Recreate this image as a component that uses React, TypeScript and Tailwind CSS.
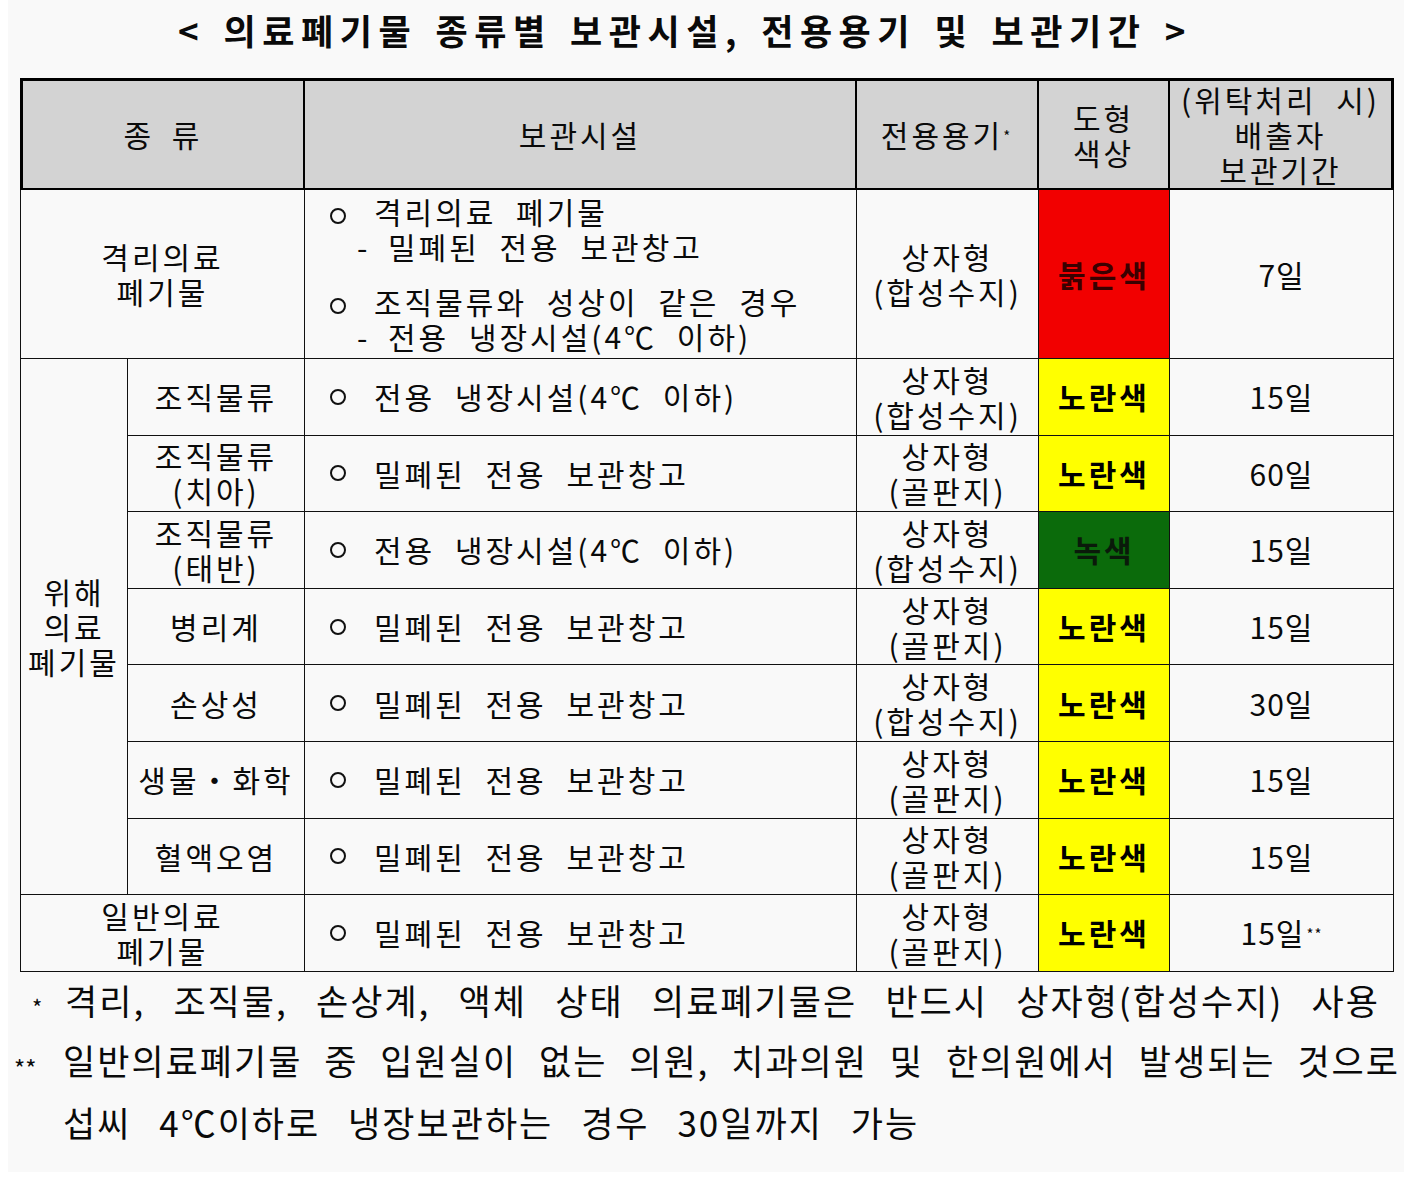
import React from "react";

const cellBase = "border-r border-b border-[#111] flex items-center justify-center text-center";
const head = "bg-[#d3d3d3] border-r-2 border-b-2 border-t-[3px] border-black flex flex-col items-center justify-center text-center";

function Circle() {
  return (
    <span className="inline-block w-[44px] align-middle">
      <span className="block w-[16px] h-[16px] rounded-full border-[2.5px] border-[#111]" />
    </span>
  );
}

function Facility({ text }: { text: string }) {
  return (
    <div className={`${cellBase} justify-start pl-[25px] whitespace-nowrap`}>
      <Circle />
      <span>{text}</span>
    </div>
  );
}

function Container({ kind }: { kind: string }) {
  return (
    <div className={`${cellBase} flex-col leading-[35px]`}>
      <span>상자형</span>
      <span>({kind})</span>
    </div>
  );
}

function Color({ c }: { c: "y" | "g" | "r" }) {
  if (c === "r")
    return <div className={`${cellBase} bg-[#f20000] font-bold text-[#3a0000]`}>붉은색</div>;
  if (c === "g")
    return <div className={`${cellBase} bg-[#0b6b0b] font-bold text-[#0a1a0a]`}>녹색</div>;
  return <div className={`${cellBase} bg-[#ffff00] font-bold text-black`}>노란색</div>;
}

function Days({ d, star }: { d: string; star?: boolean }) {
  return (
    <div className={`${cellBase} tracking-[1px]`}>
      <span>
        {d}
        {star && <sup className="text-[15px] ml-[2px] relative top-[-5px]">**</sup>}
      </span>
    </div>
  );
}

type Row = { name: React.ReactNode; fac: string; kind: string; color: "y" | "g" | "r"; days: string };

const rows: Row[] = [
  { name: "조직물류", fac: "전용 냉장시설(4℃ 이하)", kind: "합성수지", color: "y", days: "15일" },
  { name: <>조직물류<br />(치아)</>, fac: "밀폐된 전용 보관창고", kind: "골판지", color: "y", days: "60일" },
  { name: <>조직물류<br />(태반)</>, fac: "전용 냉장시설(4℃ 이하)", kind: "합성수지", color: "g", days: "15일" },
  { name: "병리계", fac: "밀폐된 전용 보관창고", kind: "골판지", color: "y", days: "15일" },
  { name: "손상성", fac: "밀폐된 전용 보관창고", kind: "합성수지", color: "y", days: "30일" },
  { name: "생물・화학", fac: "밀폐된 전용 보관창고", kind: "골판지", color: "y", days: "15일" },
  { name: "혈액오염", fac: "밀폐된 전용 보관창고", kind: "골판지", color: "y", days: "15일" },
];

export default function App() {
  return (
    <div className="w-[1412px] h-[1183px] bg-white font-['Noto_Sans_CJK_KR','Noto_Sans',sans-serif] text-[#0a0a0a]">
      <div className="mx-[8px] h-[1172px] bg-[#f9f9f9] pt-[10px]">
        <h1 className="pl-[170px] text-[35px] leading-[40px] font-bold tracking-[6.5px] [word-spacing:4px] whitespace-nowrap">
          &lt; 의료폐기물 종류별 보관시설, 전용용기 및 보관기간 &gt;
        </h1>

        <div className="ml-[12px] mt-[28px] grid w-[1374px] grid-cols-[108px_177px_552px_182px_131px_224px] grid-rows-[112px_169px_repeat(8,76.6px)] text-[30px] leading-[35px] tracking-[3px] [word-spacing:10px]">
          {/* header */}
          <div className={`${head} col-span-2 border-l-[3px] [word-spacing:8px]`}>종 류</div>
          <div className={head}>보관시설</div>
          <div className={head}>
            <span>
              전용용기<sup className="text-[15px] relative top-[-5px]">*</sup>
            </span>
          </div>
          <div className={head}>
            <span>도형</span>
            <span>색상</span>
          </div>
          <div className={`${head} border-r-[3px]`}>
            <span className="[word-spacing:10px] whitespace-nowrap">(위탁처리 시)</span>
            <span>배출자</span>
            <span>보관기간</span>
          </div>

          {/* 격리 */}
          <div className={`${cellBase} col-span-2 border-l flex-col`}>
            <span>격리의료</span>
            <span>폐기물</span>
          </div>
          <div className={`${cellBase} flex-col items-start justify-center pl-[25px] text-left whitespace-nowrap`}>
            <div>
              <Circle />
              <span>격리의료 폐기물</span>
            </div>
            <div className="pl-[27px]">
              <span className="inline-block w-[31px]">-</span>
              <span>밀폐된 전용 보관창고</span>
            </div>
            <div className="mt-[20px]">
              <Circle />
              <span>조직물류와 성상이 같은 경우</span>
            </div>
            <div className="pl-[27px]">
              <span className="inline-block w-[31px]">-</span>
              <span>전용 냉장시설(4℃ 이하)</span>
            </div>
          </div>
          <Container kind="합성수지" />
          <Color c="r" />
          <Days d="7일" />

          {/* 위해 */}
          {rows.map((r, i) => (
            <React.Fragment key={i}>
              {i === 0 && (
                <div className={`${cellBase} row-span-7 border-l flex-col`}>
                  <span>위해</span>
                  <span>의료</span>
                  <span>폐기물</span>
                </div>
              )}
              <div className={`${cellBase} flex-col whitespace-nowrap`}>{r.name}</div>
              <Facility text={r.fac} />
              <Container kind={r.kind} />
              <Color c={r.color} />
              <Days d={r.days} />
            </React.Fragment>
          ))}

          {/* 일반 */}
          <div className={`${cellBase} col-span-2 border-l flex-col`}>
            <span>일반의료</span>
            <span>폐기물</span>
          </div>
          <Facility text="밀폐된 전용 보관창고" />
          <Container kind="골판지" />
          <Color c="y" />
          <Days d="15일" star />
        </div>

        <div className="text-[35px] tracking-[2px] [word-spacing:6px] break-keep">
          <div className="flex h-[57px] items-center">
            <span className="w-[57px] pl-[24px] text-[22px] pt-[12px]">*</span>
            <p className="w-[1315px] text-justify [text-align-last:justify] whitespace-nowrap">
              격리, 조직물, 손상계, 액체 상태 의료폐기물은 반드시 상자형(합성수지) 사용
            </p>
          </div>
          <div className="flex leading-[62px]">
            <span className="w-[55px] pl-[6px] text-[24px] pt-[8px] tracking-[0px]">**</span>
            <div className="w-[1337px]">
              <p className="text-justify [text-align-last:justify] whitespace-nowrap">
                일반의료폐기물 중 입원실이 없는 의원, 치과의원 및 한의원에서 발생되는 것으로
              </p>
              <p className="whitespace-nowrap [word-spacing:18px]">섭씨 4℃이하로 냉장보관하는 경우 30일까지 가능</p>
            </div>
          </div>
        </div>
      </div>
    </div>
  );
}
